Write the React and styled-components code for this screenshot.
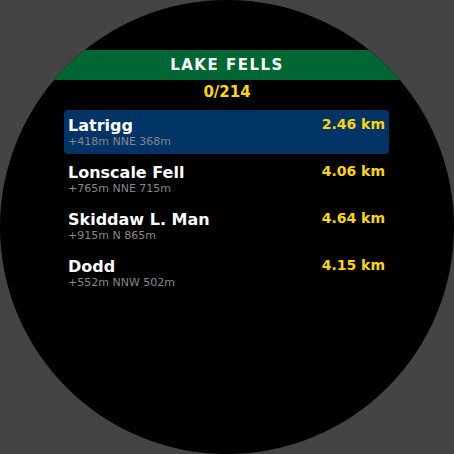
import React from "react";
import styled, { createGlobalStyle } from "styled-components";

const GlobalStyle = createGlobalStyle`
  body {
    margin: 0;
    background: #444444;
    font-family: "DejaVu Sans", "Liberation Sans", sans-serif;
  }
`;

const Face = styled("div")`
  width: 454px;
  height: 454px;
  border-radius: 50%;
  background: #000000;
  overflow: hidden;
  padding-top: 50px;
  box-sizing: border-box;
`;

const Header = styled("div")`
  height: 30px;
  line-height: 30px;
  background: #006633;
  color: #ffffff;
  font-size: 15px;
  font-weight: bold;
  letter-spacing: 1.5px;
  text-align: center;
`;

const Counter = styled("div")`
  margin-top: 4px;
  height: 17px;
  line-height: 17px;
  color: #ffd700;
  font-size: 15px;
  font-weight: bold;
  text-align: center;
`;

const List = styled("div")`
  margin: 9px 65px 0 64px;
  display: flex;
  flex-direction: column;
  gap: 3px;
`;

const Row = styled("div")`
  display: flex;
  justify-content: space-between;
  align-items: flex-start;
  padding: 6px 4px;
  border-radius: 4px;
  background: ${(p) => (p.selected ? "#003366" : "transparent")};
`;

const Name = styled("div")`
  color: #ffffff;
  font-size: 16px;
  font-weight: bold;
  line-height: 19px;
`;

const Sub = styled("div")`
  color: #888888;
  font-size: 11px;
  line-height: 13px;
`;

const Distance = styled("div")`
  color: #ffd700;
  font-size: 14px;
  font-weight: bold;
  line-height: 16px;
`;

const fells = [
  { name: "Latrigg", sub: "+418m NNE 368m", dist: "2.46 km" },
  { name: "Lonscale Fell", sub: "+765m NNE 715m", dist: "4.06 km" },
  { name: "Skiddaw L. Man", sub: "+915m N 865m", dist: "4.64 km" },
  { name: "Dodd", sub: "+552m NNW 502m", dist: "4.15 km" },
];

function App() {
  return (
    <>
      <GlobalStyle />
      <Face>
        <Header>LAKE FELLS</Header>
        <Counter>0/214</Counter>
        <List>
          {fells.map((f, i) => (
            <Row key={f.name} selected={i === 0}>
              <div>
                <Name>{f.name}</Name>
                <Sub>{f.sub}</Sub>
              </div>
              <Distance>{f.dist}</Distance>
            </Row>
          ))}
        </List>
      </Face>
    </>
  );
}

export default App;
